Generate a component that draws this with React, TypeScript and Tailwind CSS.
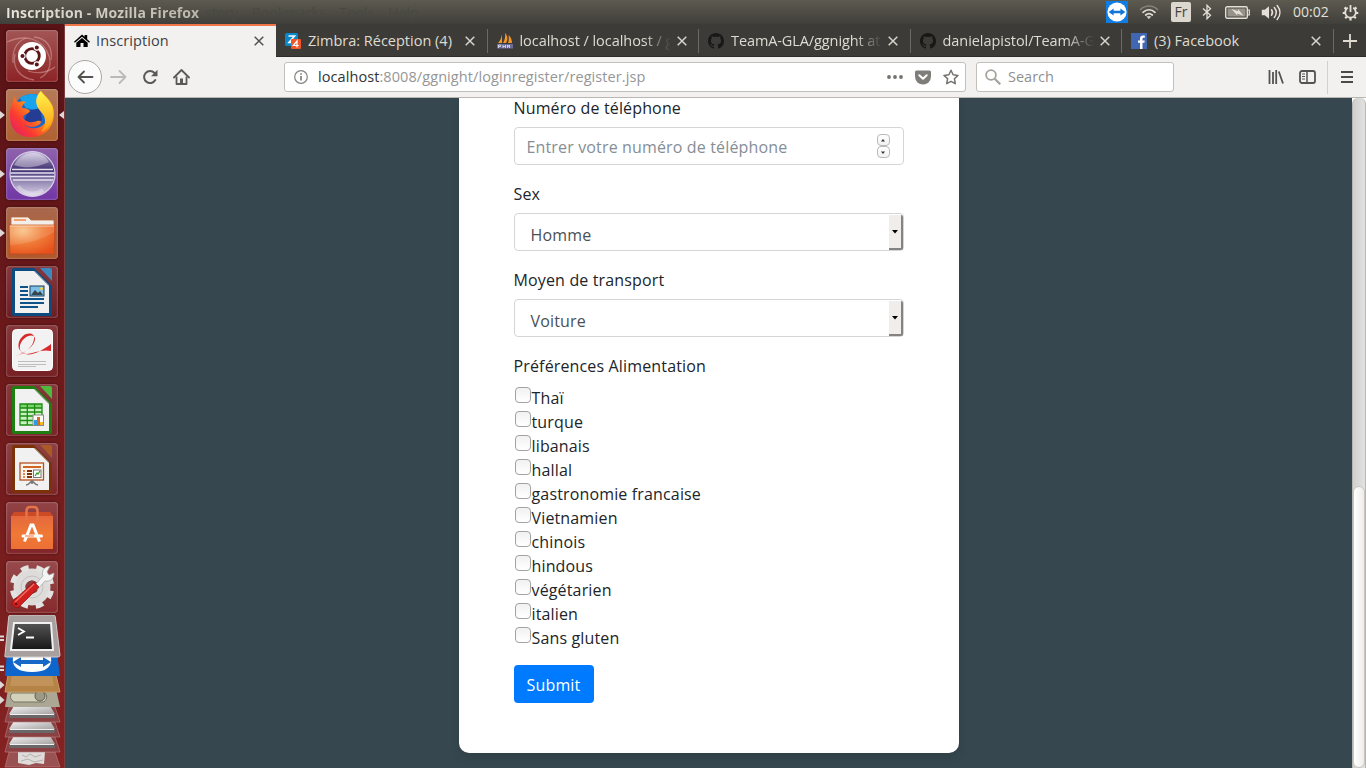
import React from "react";

const INK = "#e4e0d8";

/* ---------- top panel ---------- */

function TeamViewerIcon() {
  return (
    <svg width="22" height="22" viewBox="0 0 22 22">
      <rect width="22" height="22" fill="#0e7de4" />
      <circle cx="11" cy="11" r="9.6" fill="#fff" />
      <path d="M2.6 11l5-3.6v2.3h6.8V7.400l5 3.600-5 3.600v-2.300H7.600v2.300z" fill="#1275d8" />
    </svg>
  );
}

function WifiIcon() {
  return (
    <svg width="20" height="16" viewBox="0 0 20 16" fill="none" strokeWidth="1.7" strokeLinecap="round">
      <path d="M1.500 5.500C6.500.8 13.500.8 18.500 5.500" stroke="#85827a" />
      <path d="M4 8.300c3.600-3.300 8.400-3.300 12 0" stroke={INK} />
      <path d="M6.700 11c2-1.700 4.600-1.700 6.600 0" stroke={INK} />
      <path d="M8.300 12.600h3.400L10 14.600z" fill={INK} stroke={INK} strokeWidth=".6" />
    </svg>
  );
}

function BluetoothIcon() {
  return (
    <svg width="10" height="16" viewBox="0 0 10 16" fill="none" stroke={INK} strokeWidth="1.3">
      <path d="M1 4.500l7.500 6.700L5 14.700V1.300l3.500 3.500L1 11.500" />
    </svg>
  );
}

function BatteryIcon() {
  return (
    <svg width="25" height="13" viewBox="0 0 25 13">
      <rect x=".7" y=".7" width="21.600" height="11.600" rx="1.500" fill="none" stroke={INK} strokeWidth="1.400" />
      <rect x="2.500" y="2.500" width="18" height="8" fill="#96938a" />
      <path d="M22.500 4h1.800v5h-1.800" fill="none" stroke={INK} strokeWidth="1.200" />
      <path d="M6.500 3l6.500 2.200V3l5.500 6.800-6.200-2.300v2z" fill={INK} />
    </svg>
  );
}

function VolumeIcon() {
  return (
    <svg width="21" height="17" viewBox="0 0 21 17" fill="none" stroke={INK} strokeLinecap="round">
      <path d="M.8 5.800h3L8 2.200v12.600L3.800 11.200h-3z" fill={INK} stroke="none" />
      <path d="M10.500 5.800c1.300 1.700 1.300 3.700 0 5.400" strokeWidth="1.500" />
      <path d="M13.300 3.600c2.500 3 2.500 6.800 0 9.800" strokeWidth="1.500" />
      <path d="M16.200 1.500c3.600 4.300 3.600 9.700 0 14" strokeWidth="1.500" />
    </svg>
  );
}

function GearPowerIcon() {
  return (
    <svg width="17" height="17" viewBox="0 0 17 17" fill="none" stroke={INK}>
      <path d="M5.800 3.800a5.300 5.300 0 1 0 5.400 0" strokeWidth="1.800" />
      <path d="M8.500 1v7" strokeWidth="1.800" />
      <path d="M.7 9h2.300M14 9h2.300M2.500 3.500l2 1.500M14.500 3.500l-2 1.500M3.200 14.200l1.500-1.500M13.800 14.200l-1.500-1.500M8.500 14v2.500" strokeWidth="2.200" />
    </svg>
  );
}

function TopPanel() {
  return (
    <header className="flex h-6 shrink-0 items-center bg-linear-to-b from-[#5d5a50] to-[#403f3a] text-[#e4e0d8]">
      <div className="flex w-[1106px] shrink-0 items-center whitespace-nowrap pl-1.5 text-[14px]">
        <span className="w-[199px] bg-linear-to-r from-[#e8e4da] to-[#b9b5aa] bg-clip-text font-bold tracking-[0.12px] text-transparent">
          Inscription - Mozilla Firefox
        </span>
        <span className="flex gap-3.5 text-[#4a4842]">
          <span>story</span>
          <span>Bookmarks</span>
          <span>Tools</span>
          <span>Help</span>
        </span>
      </div>
      <TeamViewerIcon />
      <div className="ml-[11px]"><WifiIcon /></div>
      <div className="ml-3 flex h-5 w-5 items-center justify-center rounded-[2px] bg-[#dcd8cf] text-[14px] leading-none text-[#46443e]">Fr</div>
      <div className="ml-[11px]"><BluetoothIcon /></div>
      <div className="ml-[13px]"><BatteryIcon /></div>
      <div className="ml-[11px]"><VolumeIcon /></div>
      <span className="ml-[11px] w-[37px] shrink-0 whitespace-nowrap text-[14px] leading-5">00:02</span>
      <div className="ml-[12px]"><GearPowerIcon /></div>
    </header>
  );
}

/* ---------- launcher ---------- */

function Tile({ children, tone, marks }: { children: React.ReactNode; tone: string; marks?: string }) {
  return (
    <div className="flex h-[52px] w-16 items-center">
      <span className="w-1.5">
        {marks ? (
          <svg width="5" height="8" viewBox="0 0 5 8"><path d="M0 0l5 4-5 4z" fill="#ded8d6" /></svg>
        ) : null}
      </span>
      <div className={"h-[52px] w-[52px] overflow-hidden rounded-[4px] shadow-[0_0_3px_rgba(0,0,0,0.45),inset_0_0_2px_rgba(255,255,255,0.55)] " + tone}>
        <svg width="52" height="52" viewBox="0 0 52 52">{children}</svg>
      </div>
      <span className="w-1.5">
        {marks === "both" ? (
          <svg width="6" height="8" viewBox="0 0 6 8"><path d="M6 0L1 4l5 4z" fill="#ded8d6" /></svg>
        ) : null}
      </span>
    </div>
  );
}

function OfficeSheet({ edge, corner, children }: { edge: string; corner: string; children: React.ReactNode }) {
  return (
    <>
      <path d="M6 4q0-2 2-2h20l18 18v28q0 2-2 2H8q-2 0-2-2z" fill={edge} />
      <path d="M34 2h10q2 0 2 2v11z" fill={corner} />
      <path d="M9 5h19l15 15v27H9z" fill="#f1f1f1" />
      <path d="M28 5l15 15v-1L29 5z" fill="#a9a9a9" />
      {children}
    </>
  );
}

function DashIcon() {
  return (
    <>
      <g fill="none" stroke="#e8b5b5" strokeOpacity=".45" strokeWidth="1.300">
        <path d="M1 12c18-8 36-4 42 14 3 10-1 18-9 22" />
        <path d="M9 24c-3 14 5 24 19 26" />
        <path d="M28 7c12 1 19 10 17 23" />
        <path d="M7 33C6 20 10 12 20 8" />
        <path d="M22 41c12 4 22 0 27-4" />
      </g>
      <circle cx="26" cy="26" r="14" fill="#fff" />
      <circle cx="26" cy="26" r="7.300" fill="none" stroke="#5e1417" strokeWidth="2.800" />
      <g fill="#5e1417" stroke="#fff" strokeWidth="1.100">
        <circle cx="16.500" cy="26" r="2.600" />
        <circle cx="30.800" cy="17.500" r="2.600" />
        <circle cx="30.800" cy="34.500" r="2.600" />
      </g>
    </>
  );
}

function FirefoxIcon() {
  return (
    <>
      <defs>
        <linearGradient id="fxBody" x1="1" y1="0" x2="0" y2="1">
          <stop offset="0" stopColor="#ffe226" />
          <stop offset=".4" stopColor="#ff9a16" />
          <stop offset=".7" stopColor="#fb3b30" />
          <stop offset="1" stopColor="#e01778" />
        </linearGradient>
        <linearGradient id="fxTail" x1="0" y1="0" x2="0" y2="1">
          <stop offset="0" stopColor="#fff44c" />
          <stop offset="1" stopColor="#ff9b12" />
        </linearGradient>
      </defs>
      <circle cx="26" cy="24" r="19" fill="#1e67c6" />
      <path d="M14 9c8-6 18-5 23 1l-3 12-14-3z" fill="#17a3ee" />
      <path d="M22 22l12-3 2 12-8 5-10-3z" fill="#243c93" />
      <path d="M9 7c0 3 1 5 3 6 3-1 6-1 8 0-3 2-4 4-4 6 4 0 6 1 8 3-1 3-6 3-7 6 2 6 10 6 14 4 4-1 5 1 3 3-5 4-12 4-16 0 6 8 23 5 24-9 1-8-8-10-10-16-1-3 0-5 3-8 3 4 9 8 12 16 4 16-6 30-21 30C12 49 3 39 4 25c0-8 3-12 5-18z" fill="url(#fxBody)" />
      <path d="M35 2c1 5 12 9 12 22 0 10-6 17-12 19 6-8 5-15 0-20-7-8-6-15 0-21z" fill="url(#fxTail)" />
    </>
  );
}

function EclipseIcon() {
  return (
    <>
      <defs>
        <linearGradient id="ecl" x1="0" y1="0" x2="0" y2="1">
          <stop offset="0" stopColor="#cfc4e4" />
          <stop offset=".25" stopColor="#6a5b92" />
          <stop offset=".42" stopColor="#3f3070" />
          <stop offset=".65" stopColor="#8f83b0" />
          <stop offset="1" stopColor="#ddd6ea" />
        </linearGradient>
      </defs>
      <circle cx="26.500" cy="26" r="22.500" fill="url(#ecl)" stroke="#d9d0e8" strokeWidth="1.200" />
      <path d="M8 17c7-14 27-17 35-3-10 4-20 8-35 3z" fill="#fff" opacity=".38" />
      <path d="M6 21.500h41M4.500 25h44M4.500 28.500h44M7 32h40" stroke="#e6e1f0" strokeWidth="1.600" />
      <path d="M12 38c5 8 17 10 25 4" stroke="#fff" strokeWidth="4" opacity=".3" fill="none" />
    </>
  );
}

function FolderIcon() {
  return (
    <>
      <defs>
        <radialGradient id="fold" cx=".3" cy=".2" r=".9">
          <stop offset="0" stopColor="#f8c285" />
          <stop offset=".5" stopColor="#f07c38" />
          <stop offset="1" stopColor="#e6501b" />
        </radialGradient>
      </defs>
      <path d="M5 11q0-1 1-1h16l3 3h22q1 0 1 1v8H5z" fill="#f3eeea" stroke="#b4683c" strokeWidth=".8" />
      <path d="M8 13h12" stroke="#f4a26b" strokeWidth="2" />
      <path d="M3 18h46l-1 28q0 1-1 1H5q-1 0-1-1z" fill="url(#fold)" stroke="#c1491b" strokeWidth=".7" />
      <path d="M4 19h44" stroke="#f9d0a5" strokeWidth="1" />
      <path d="M4 38c15-1 32-5 44-13v-6H4z" fill="#fff" opacity=".12" />
    </>
  );
}

function WriterIcon() {
  return (
    <OfficeSheet edge="#0c4b80" corner="#3e88bd">
      <path d="M14 21h8M14 25h8M14 29h8M14 33h24M14 37h24M14 41h18" stroke="#0f5388" strokeWidth="1.800" />
      <rect x="24" y="20" width="14" height="10" fill="#7cc0e8" stroke="#173f5c" strokeWidth="1" />
      <path d="M25 29l4-5 3 3 2-2 3 4z" fill="#38434a" />
      <circle cx="35.500" cy="22.500" r="1.500" fill="#f4d33a" />
    </OfficeSheet>
  );
}

function PdfIcon() {
  return (
    <>
      <rect x="6.500" y="4.500" width="40" height="41" rx="4" fill="#f2f2f2" stroke="#fff" />
      <path d="M9 31c11-3 20-11 20-17 0-5-7-4-10-1-7 5-7 15 0 16 8 2 18-4 26-10v7c-9-2-17 2-24 3-10-1-11-12-4-18 5-4 12-3 11 3-1 8-9 15-19 17z" fill="#d72a2a" />
      <path d="M12 36.500h28M12 39.500h28M12 41.500h18" stroke="#bdbdbd" strokeWidth="1" />
    </>
  );
}

function CalcIcon() {
  return (
    <OfficeSheet edge="#1d7f10" corner="#50b83d">
      <rect x="14" y="20" width="22" height="21" fill="#c8f2c0" />
      <path d="M14 20h22v4H14z" fill="#79d56c" />
      <path d="M14 20h22v21H14zM14 24h22M14 28h22M14 32h22M14 36.500h22M21.300 20v21M28.600 20v21" fill="none" stroke="#1d8b12" strokeWidth="1.300" />
      <rect x="27" y="31" width="10.500" height="10.500" fill="#fafafa" stroke="#888" />
      <path d="M28 36h3v5h-3z" fill="#2f9be2" />
      <path d="M31 33h3v8h-3z" fill="#d96a25" />
      <path d="M34 38h3v3h-3z" fill="#f3bd21" />
    </OfficeSheet>
  );
}

function ImpressIcon() {
  return (
    <OfficeSheet edge="#7c3209" corner="#a95a26">
      <rect x="14" y="20" width="23.500" height="17" fill="#fbf4ef" stroke="#b4521d" strokeWidth="1.300" />
      <path d="M17 24h18" stroke="#cf651f" strokeWidth="1.800" />
      <path d="M17 28h2M17 31h2M17 34h2" stroke="#e18b50" strokeWidth="2" />
      <path d="M21 28h5M21 31h5M21 34h5" stroke="#7a340e" strokeWidth="2" />
      <rect x="27.500" y="27" width="7.500" height="7.500" fill="#fff" stroke="#777" />
      <path d="M29 33l2-3 1 1 2-3" fill="none" stroke="#31a131" strokeWidth="1.200" />
      <path d="M20 42c3 0 5-4 6-4s3 4 6 4M26 37v4" fill="none" stroke="#777" strokeWidth="1.600" />
    </OfficeSheet>
  );
}

function SoftwareIcon() {
  return (
    <>
      <defs>
        <linearGradient id="bag" x1="0" y1="0" x2="0" y2="1">
          <stop offset="0" stopColor="#e5683d" />
          <stop offset=".55" stopColor="#ef7a35" />
          <stop offset="1" stopColor="#ed6f35" />
        </linearGradient>
      </defs>
      <path d="M5 14l3-4h36l3 4z" fill="#cc4b24" />
      <path d="M5 14h42v33H5z" fill="url(#bag)" />
      <path d="M20.500 18V9q0-4 4-4h3q4 0 4 4v9" fill="none" stroke="#e57349" strokeWidth="2.500" />
      <path d="M18.500 39.500L25 23h2l6.500 16.500" fill="none" stroke="#fff" strokeWidth="3" />
      <path d="M17 34h18.500" stroke="#fff" strokeWidth="3" strokeLinecap="round" />
      <path d="M19 34h9" stroke="#ed7435" strokeWidth="1" />
    </>
  );
}

function SettingsIcon() {
  return (
    <>
      <circle cx="26" cy="26" r="12.500" fill="none" stroke="#dddcda" strokeWidth="12" />
      <circle cx="26" cy="26" r="19.500" fill="none" stroke="#e2e2e0" strokeWidth="5.500" strokeDasharray="7.700 7.620" transform="rotate(11 26 26)" />
      <circle cx="26" cy="26" r="11" fill="none" stroke="#c4c2c0" strokeWidth="1" />
      <circle cx="26" cy="26" r="6.500" fill="#8b3c3e" />
      <path d="M28 25l9-10c-2-5 1-9 7-10l-3 6 2 3 5-2c0 6-4 9-9 8l-8 9z" fill="#f4f4f4" stroke="#a5a5a5" strokeWidth=".7" />
      <path d="M28 21l5 5-20 20q-3 2-6-1-2-3 0-5z" fill="#cf1f1e" stroke="#8d1010" strokeWidth=".7" />
      <path d="M28 23L9 41" stroke="#ef6b62" strokeWidth="1.500" />
      <circle cx="10" cy="43" r="1.300" fill="#721010" />
    </>
  );
}

function LauncherStack() {
  return (
    <svg className="mt-[2px] shrink-0" width="64" height="153" viewBox="0 0 64 153">
      <defs>
        <linearGradient id="disk" x1="0" y1="0" x2="1" y2="1">
          <stop offset="0" stopColor="#f4f4f4" />
          <stop offset="1" stopColor="#a6a2a2" />
        </linearGradient>
        <linearGradient id="term" x1="0" y1="0" x2="0" y2="1">
          <stop offset="0" stopColor="#555" />
          <stop offset="1" stopColor="#161616" />
        </linearGradient>
      </defs>
      <path d="M9 137h46l5 15H5z" fill="#9a5152" stroke="#b98182" strokeOpacity=".6" />
      <path d="M18 137l4-3 6 2 8-2 9 3-1 12-8-1-7 2-11-2z" fill="#dedbd9" />
      <path d="M22 140l4 2 4-3 5 3 6-2M21 146l7-2 6 3 9-2" stroke="#a9a4a2" strokeWidth=".8" fill="none" />
      {[122, 107, 92].map((y) => (
        <g key={y}>
          <path d={`M9 ${y}h46l5 15H5z`} fill="#8b4041" stroke="#b98182" strokeOpacity=".6" />
          <path d={`M14 ${y - 1}h36l5 8H9z`} fill="url(#disk)" />
          <path d={`M9 ${y + 7}h46v3q0 1-1 1H10q-1 0-1-1z`} fill="#696767" />
          <path d={`M10 ${y + 7.500}h44`} stroke="#f1f1f1" />
        </g>
      ))}
      <path d="M8 74h48l4 18H5z" fill="#aca795" />
      <path d="M12 78h33q4 4-1 9H14q-6-4-2-9z" fill="#d3d1b9" stroke="#777463" />
      <circle cx="40" cy="81" r="5" fill="#9c9a86" stroke="#5f5d50" />
      <path d="M8 60h48l4 17H5z" fill="#b58345" stroke="#c79a61" />
      <path d="M12 60h40l2 11H10z" fill="#c1935a" />
      <path d="M7 38h50l3 23H5z" fill="#0e66cc" />
      <path d="M13 42h38q2 15-19 15T13 42z" fill="#fff" />
      <path d="M13 47l8-5v3h22v-3l8 5-8 5v-3H21v3z" fill="#1767c7" />
      <path d="M10 0h44q1 0 1.300 2L60 40q0 2-2 2H6q-2 0-1-2L8.700 2Q9 0 10 0z" fill="#a7a09e" stroke="#d0caca" />
      <path d="M14 8h37l2 27H11z" fill="url(#term)" stroke="#f0f0f0" strokeWidth="2" />
      <path d="M18 13l6 3.500-6 3.500M26 22.500h8" stroke="#fff" strokeWidth="1.800" fill="none" />
      <path d="M0 21.500h4M0 25h4M0 51.500h4M0 55h4" stroke="#ded8d6" strokeWidth="2" />
      <path d="M0 66l4.500 4-4.500 4zM0 81l4.500 4-4.500 4z" fill="#ded8d6" />
    </svg>
  );
}

function Launcher() {
  return (
    <aside className="flex w-[65px] shrink-0 flex-col overflow-hidden border-r border-[#7e3d40] bg-linear-to-b from-[#591316] to-[#852222] pt-1.5">
      <div className="flex flex-col gap-[7px]">
        <Tile tone="bg-linear-to-b from-[#a25555] to-[#8c2225]"><DashIcon /></Tile>
        <Tile tone="bg-linear-to-b from-[#b57a5a] to-[#b0602f]" marks="both"><FirefoxIcon /></Tile>
        <Tile tone="bg-linear-to-b from-[#8e62ab] to-[#7236a5]" marks="left"><EclipseIcon /></Tile>
        <Tile tone="bg-linear-to-b from-[#a8684d] to-[#b0572b]" marks="left"><FolderIcon /></Tile>
        <Tile tone="bg-linear-to-b from-[#84393e] to-[#6b1d24]"><WriterIcon /></Tile>
        <Tile tone="bg-linear-to-b from-[#85383b] to-[#762025]"><PdfIcon /></Tile>
        <Tile tone="bg-linear-to-b from-[#85383b] to-[#7b2328]"><CalcIcon /></Tile>
        <Tile tone="bg-linear-to-b from-[#8d4143] to-[#7d2529]"><ImpressIcon /></Tile>
        <Tile tone="bg-linear-to-b from-[#914346] to-[#812427]"><SoftwareIcon /></Tile>
        <Tile tone="bg-linear-to-b from-[#984a4c] to-[#852a2c]"><SettingsIcon /></Tile>
      </div>
      <LauncherStack />
    </aside>
  );
}

/* ---------- browser chrome ---------- */

function CloseIcon({ color }: { color: string }) {
  return (
    <svg className="shrink-0" width="10" height="10" viewBox="0 0 10 10">
      <path d="M.7.7l8.600 8.600M9.300.7L.7 9.300" stroke={color} strokeWidth="1.500" />
    </svg>
  );
}

function HouseFavicon() {
  return (
    <svg width="16" height="14" viewBox="0 0 16 14">
      <path d="M8 .5l2.600 2.300V1h2.600v4.200L16 7.700l-.9 1L8 2.700.9 8.700 0 7.700z" />
      <path d="M8 4l5.700 4.800V13H9.500V9h-3v4H2.300V8.800z" />
    </svg>
  );
}

function ZimbraFavicon() {
  return (
    <svg width="16" height="16" viewBox="0 0 16 16">
      <rect width="13" height="13" rx="1.500" fill="#0b86c8" />
      <path d="M3.500 3h6L4 9.500h5" fill="none" stroke="#fff" strokeWidth="1.600" />
      <rect x="6" y="6" width="10" height="10" rx="1" fill="#f0562b" />
      <path d="M12 14.500V8L8.300 12.500h5.500" fill="none" stroke="#fff" strokeWidth="1.200" />
    </svg>
  );
}

function PmaFavicon() {
  return (
    <svg width="16" height="16" viewBox="0 0 16 16">
      <path d="M5 1v9H1c2-2 3.500-5 4-9zM8 0c3 3 3 7 1 10H6c2-3 2.500-7 2-10zM11.500 2c2.500 2 3.500 5 3.500 8h-4c1-2 1-5 .5-8z" fill="#f59523" />
      <path d="M0 11h16v4.500H0z" fill="#6c6c9c" />
      <path d="M1.500 15v-3h2v1.500h-2M6 12v3M6 13.500h2M8.500 12v3M10.500 15v-3l1 1.500 1-1.500v3" fill="none" stroke="#e2e2f0" strokeWidth=".8" />
    </svg>
  );
}

function GithubFavicon() {
  return (
    <svg width="16" height="16" viewBox="0 0 16 16" fill="#191717">
      <path d="M8 0C3.580 0 0 3.580 0 8c0 3.540 2.290 6.530 5.470 7.590.4.070.55-.17.55-.38 0-.19-.01-.82-.01-1.490-2.010.37-2.530-.49-2.690-.94-.09-.23-.48-.94-.82-1.130-.28-.15-.68-.52-.01-.53.63-.01 1.080.58 1.230.82.72 1.210 1.870.87 2.330.66.070-.52.28-.87.51-1.070-1.780-.2-3.640-.89-3.640-3.950 0-.87.31-1.590.82-2.150-.08-.2-.36-1.020.08-2.120 0 0 .67-.21 2.200.82.64-.18 1.320-.27 2-.27s1.360.09 2 .27c1.530-1.040 2.200-.82 2.200-.82.44 1.100.16 1.920.08 2.120.51.56.82 1.270.82 2.150 0 3.070-1.870 3.750-3.650 3.950.29.25.54.73.54 1.480 0 1.070-.01 1.930-.01 2.200 0 .21.15.46.55.38A8.010 8.010 0 0 0 16 8c0-4.420-3.580-8-8-8z" />
    </svg>
  );
}

function FacebookFavicon() {
  return (
    <svg width="16" height="16" viewBox="0 0 16 16">
      <rect width="16" height="16" fill="#4267b2" />
      <path d="M9 16V9.800H7V7.400h2V5.600C9 3.600 10.200 2.500 12 2.500h1.800v2.200h-1.200c-.8 0-1.100.4-1.100 1.100v1.600h2.200l-.3 2.400h-1.900V16z" fill="#fff" />
    </svg>
  );
}

function Tab({ icon, title, textClass, fade }: { icon: React.ReactNode; title: string; textClass: string; fade?: boolean }) {
  return (
    <div className="flex h-[33px] w-[211.500px] shrink-0 items-center">
      <div className="ml-[9px] flex h-4 w-4 shrink-0 items-center">{icon}</div>
      <div className={"ml-[7px] w-[151px] shrink-0 whitespace-nowrap text-[14.5px] leading-5 " + (fade ? "[mask-image:linear-gradient(to_right,black_82%,transparent_100%)] " : "") + textClass}>
        {title}
      </div>
      <div className="ml-[6px]"><CloseIcon color="#d8d4cb" /></div>
      <div className="ml-auto h-6 w-px bg-[#6b6963]" />
    </div>
  );
}

function TabBar() {
  return (
    <div className="flex h-[33px] shrink-0 items-center bg-[#3c3b37] text-[#dfdbd2] shadow-[inset_0_-1px_0_#2d2c29]">
      <div className="flex h-[33px] w-[211px] shrink-0 items-center border-t-2 border-[#f0764a] bg-[#f2f1f0] pb-px text-[#3c4048]">
        <div className="ml-[9px] flex h-4 w-4 items-center"><HouseFavicon /></div>
        <div className="ml-1.5 w-[150px] text-[14.5px] leading-5 tracking-[0.1px]">Inscription</div>
        <div className="ml-[8px]"><CloseIcon color="#55524d" /></div>
      </div>
      <Tab icon={<ZimbraFavicon />} title="Zimbra: Réception (4)" textClass="tracking-[0px]" />
      <Tab icon={<PmaFavicon />} title="localhost / localhost / g" textClass="tracking-[-0.05px]" fade />
      <Tab icon={<GithubFavicon />} title="TeamA-GLA/ggnight at" textClass="tracking-[-0.1px]" fade />
      <Tab icon={<GithubFavicon />} title="danielapistol/TeamA-G" textClass="tracking-[-0.05px]" fade />
      <Tab icon={<FacebookFavicon />} title="(3) Facebook" textClass="tracking-[0px]" />
      <div className="flex flex-1 justify-center">
        <svg width="14" height="14" viewBox="0 0 14 14"><path d="M7 0v14M0 7h14" stroke="#dfdbd2" strokeWidth="1.800" /></svg>
      </div>
    </div>
  );
}

function Toolbar() {
  return (
    <div className="flex h-[41px] shrink-0 items-center border-b border-[#bab6b1] bg-[#f2f1f0]">
      <div className="ml-[3px] flex h-[34px] w-[34px] shrink-0 items-center justify-center rounded-full border border-[#aaa7a3] bg-[#fcfcfc]">
        <svg width="17" height="14" viewBox="0 0 17 14" fill="none" stroke="#55534f" strokeWidth="1.800"><path d="M7 1.500L1.500 7 7 12.500M1.500 7H15.500" strokeLinejoin="round" strokeLinecap="round" /></svg>
      </div>
      <svg className="ml-[8px] shrink-0" width="17" height="14" viewBox="0 0 17 14" fill="none" stroke="#bcbab7" strokeWidth="1.800"><path d="M9.500 1l6 6-6 6M15.500 7H1" strokeLinejoin="round" strokeLinecap="round" /></svg>
      <svg className="ml-[15px] shrink-0" width="16" height="16" viewBox="0 0 16 16" fill="none" stroke="#5b5955" strokeWidth="2"><path d="M13.300 11A6 6 0 1 1 12.500 4" strokeLinecap="round" /><path d="M15.500.8v6.400H9z" fill="#5b5955" stroke="none" /></svg>
      <svg className="ml-[15px] shrink-0" width="17" height="16" viewBox="0 0 17 16" fill="none" stroke="#5b5955" strokeWidth="1.800"><path d="M1 8.500L8.500 1 16 8.500" strokeLinejoin="round" strokeLinecap="round" /><path d="M3.500 7.500V15h10V7.500" strokeLinejoin="round" /><path d="M7 9.500h3V15H7z" fill="#5b5955" stroke="none" /></svg>

      <div className="ml-[94px] flex h-[30px] w-[682px] shrink-0 items-center rounded-[3px] border border-[#c3bfba] bg-white">
        <svg className="ml-[9px] shrink-0" width="14" height="14" viewBox="0 0 14 14"><circle cx="7" cy="7" r="6.300" fill="none" stroke="#85827e" strokeWidth="1.200" /><path d="M7 6v4.500M7 3.300v1.500" stroke="#7b7874" strokeWidth="1.600" /></svg>
        <div className="ml-2.5 w-[561px] whitespace-nowrap text-[14.500px] tracking-[0.08px] text-[#969696]">
          <span className="text-[#2e3436]">localhost</span>:8008/ggnight/loginregister/register.jsp
        </div>
        <svg className="ml-[8px] shrink-0" width="16" height="4" viewBox="0 0 16 4" fill="#74726e"><circle cx="2" cy="2" r="1.900" /><circle cx="8" cy="2" r="1.900" /><circle cx="14" cy="2" r="1.900" /></svg>
        <svg className="ml-3 shrink-0" width="16" height="15" viewBox="0 0 16 15"><path d="M1.500.5h13Q16 .5 16 2v4.500a8 8 0 0 1-16 0V2Q0 .5 1.500.5z" fill="#7f7d7a" /><path d="M4.300 5.300L8 8.800l3.700-3.500" fill="none" stroke="#fff" strokeWidth="2" strokeLinecap="round" strokeLinejoin="round" /></svg>
        <svg className="ml-3 shrink-0" width="16" height="16" viewBox="0 0 16 16"><path d="M8 1.300l2.100 4.500 4.900.6-3.600 3.400.9 4.900L8 12.300l-4.300 2.400.9-4.900L1 6.400l4.900-.6z" fill="none" stroke="#74726e" strokeWidth="1.500" strokeLinejoin="round" /></svg>
      </div>

      <div className="ml-2.5 flex h-[30px] w-[198px] shrink-0 items-center rounded-[3px] border border-[#c3bfba] bg-white">
        <svg className="ml-[8px]" width="16" height="16" viewBox="0 0 16 16" fill="none" stroke="#a5a29e"><circle cx="6" cy="6" r="4.900" strokeWidth="1.800" /><path d="M9.700 9.700l5.600 5.600" strokeWidth="2.200" /></svg>
        <span className="ml-[7px] text-[14.500px] text-[#909090]">Search</span>
      </div>

      <svg className="ml-[94px] shrink-0" width="16" height="14" viewBox="0 0 16 14" fill="none" stroke="#55534f" strokeWidth="1.800"><path d="M1.500 0v14M5 2v12M8.200 0v14M10.800 1.500L15 13.500" /></svg>
      <svg className="ml-[15px] shrink-0" width="17" height="14" viewBox="0 0 17 14" fill="none" stroke="#55534f"><rect x="1" y="1" width="15" height="12" rx="2" strokeWidth="1.800" /><path d="M8 1v12" strokeWidth="1.500" /><path d="M3 4h3M3 6.500h3M3 9h3" /></svg>
      <div className="ml-[11px] h-[33px] w-px bg-[#d3d0cc]" />
      <svg className="ml-[13px] shrink-0" width="13" height="12" viewBox="0 0 13 12" stroke="#4c4a46" strokeWidth="1.800"><path d="M0 1h12M0 6h12M0 11h12" /></svg>
    </div>
  );
}

/* ---------- page ---------- */

const preferences = ["Thaï", "turque", "libanais", "hallal", "gastronomie francaise", "Vietnamien", "chinois", "hindous", "végétarien", "italien", "Sans gluten"];

function SelectField({ label, value }: { label: string; value: string }) {
  return (
    <div className="mb-4">
      <div className="mb-[7px] h-[25px] pt-px">{label}</div>
      <div className="flex h-[38px] rounded-[4px] border border-[#d3d6d9] pl-4 text-[#495057]">
        <span className="pt-[9px]">{value}</span>
        <div className="mt-px ml-auto flex h-[35px] w-[14px] items-center justify-center rounded-r-[2px] border-r-2 border-b-2 border-[#858381] bg-[#efeeec]">
          <svg width="6" height="4" viewBox="0 0 6 4"><path d="M0 0h6L3 3.500z" /></svg>
        </div>
      </div>
    </div>
  );
}

function SpinButton({ up }: { up?: boolean }) {
  return (
    <div className="flex h-3 w-[13px] items-center justify-center rounded-[4px] border border-[#b9b9b9] bg-linear-to-b from-white to-[#f1f1f1]">
      <svg width="4" height="3" viewBox="0 0 4 3">{up ? <path d="M2 0l2 2.500H0z" fill="#333" /> : <path d="M0 .5h4L2 3z" fill="#333" />}</svg>
    </div>
  );
}

function RegisterPage() {
  return (
    <div className="flex min-h-0 flex-1">
      <main className="flex flex-1 items-start justify-center overflow-hidden bg-[#36474f]">
        <form className="-mt-[3px] h-[658px] w-[500px] rounded-b-[10px] bg-white px-[55px] text-[16px] leading-6 tracking-[0.15px] text-[#212529] shadow-[0_5px_10px_rgba(0,0,0,0.1)]">
          <div className="mb-4">
            <div className="mb-[7px] h-[25px] pt-px">Numéro de téléphone</div>
            <div className="flex h-[38px] items-center justify-between rounded-[4px] border border-[#d3d6d9] pr-[13px] pl-3 text-[#868e96]">
              <span className="pt-0.5">Entrer votre numéro de téléphone</span>
              <div className="flex flex-col">
                <SpinButton up />
                <SpinButton />
              </div>
            </div>
          </div>
          <SelectField label="Sex" value="Homme" />
          <SelectField label="Moyen de transport" value="Voiture" />
          <div className="mb-4">
            <div className="mb-[7px] h-[25px] pt-px">Préférences Alimentation</div>
            {preferences.map((name) => (
              <label key={name} className="flex h-6 items-start">
                <span className="mt-[2px] mr-px ml-px h-4 w-4 rounded-[4px] border border-[#a2a2a2] bg-linear-to-b from-[#f1f1f1] to-white" />
                <span className="pt-px">{name}</span>
              </label>
            ))}
          </div>
          <button type="button" className="flex h-[38px] w-20 items-center justify-center rounded-[4px] bg-[#007bff] pt-0.5 text-white">Submit</button>
        </form>
      </main>
      <div className="flex w-[14px] shrink-0 flex-col justify-end rounded-t-[6px] border-x border-[#b9b5b0] bg-linear-to-r from-[#d0cfce] to-[#e2e2e2]">
        <div className="h-[282px] rounded-[6px] border border-[#c9c6c1] bg-linear-to-r from-white to-[#eeedea]" />
      </div>
    </div>
  );
}

export default function App() {
  return (
    <div className="flex h-[768px] w-[1366px] flex-col overflow-hidden font-['Open_Sans','Noto_Sans',sans-serif]">
      <TopPanel />
      <div className="flex min-h-0 flex-1">
        <Launcher />
        <div className="flex min-w-0 flex-1 flex-col">
          <TabBar />
          <Toolbar />
          <RegisterPage />
        </div>
      </div>
    </div>
  );
}
